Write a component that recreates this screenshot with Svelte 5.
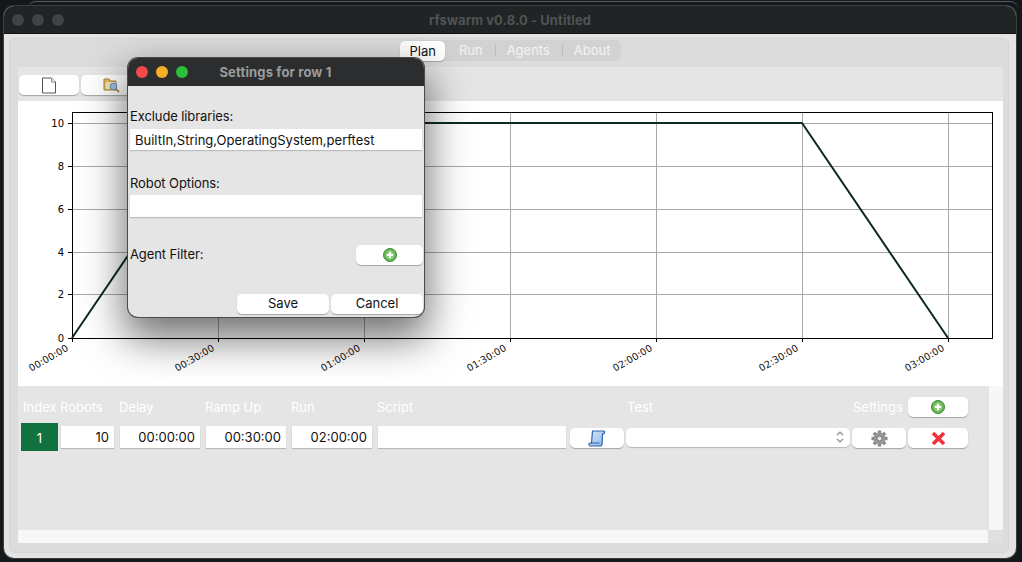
<script>
  // one row of the plan table, plus chart ticks
  const yTicks = [
    { label: "10", y: 123 },
    { label: "8", y: 166 },
    { label: "6", y: 209 },
    { label: "4", y: 252 },
    { label: "2", y: 294 },
    { label: "0", y: 338 }
  ];
  const xTicks = [
    { label: "00:00:00", x: 72 },
    { label: "00:30:00", x: 218 },
    { label: "01:00:00", x: 364 },
    { label: "01:30:00", x: 510 },
    { label: "02:00:00", x: 656 },
    { label: "02:30:00", x: 802 },
    { label: "03:00:00", x: 948 }
  ];
  const tabs = ["Run", "Agents", "About"];
  const gearTeeth = [0, 45, 90, 135];
</script>

{#snippet plus()}
  <svg class="ico" width="16" height="16" viewBox="0 0 16 16">
    <circle cx="8" cy="8" r="6.6" fill="#66ae58" stroke="#4b9a45" />
    <circle cx="8" cy="8" r="4.4" fill="#8bcb78" />
    <path d="M8 4.800v6.400M4.800 8h6.400" stroke="#fff" stroke-width="2" />
  </svg>
{/snippet}

<div class="desktop">
  <div class="behind"></div>
  <div class="window">
    <div class="titlebar">
      <div class="lights dim"><i></i><i></i><i></i></div>
      <span>rfswarm v0.8.0 - Untitled</span>
    </div>
    <div class="content">
      <div class="tabs">
        <div class="tabgroup">
          <span class="tab active">Plan</span>
          {#each tabs as t, i}
            <span class="tab" class:sep={i > 0}>{t}</span>
          {/each}
        </div>
      </div>
      <div class="panel">
        <div class="toolbar">
          <button class="btn tool" aria-label="New">
            <svg width="16" height="17" viewBox="0 0 16 17">
              <path d="M1.500 1h9l4 4v11h-13z" fill="#fff" stroke="#555" />
              <path d="M10.500 1v4h4" fill="#eee" stroke="#888" />
            </svg>
          </button>
          <button class="btn tool" aria-label="Open">
            <svg width="17" height="16" viewBox="0 0 17 16">
              <path d="M1 2h5l1 2h6v9H1z" fill="#e3b95c" stroke="#a8853a" />
              <path d="M2.500 5h10v7h-10z" fill="#f8e8b8" />
              <circle cx="10.500" cy="9.500" r="3.400" fill="#9cc3ea" stroke="#6a8fb5" />
              <path d="M13 12l3 3" stroke="#b4692f" stroke-width="1.600" />
            </svg>
          </button>
        </div>

        <svg class="chart" width="985" height="285" viewBox="18 101 985 285">
          <rect x="18" y="101" width="985" height="285" fill="#fff" />
          {#each yTicks as t}
            <line x1="72" x2="993" y1={t.y + 0.5} y2={t.y + 0.5} stroke="#a8a8a8" />
            <line x1="68" x2="72" y1={t.y + 0.5} y2={t.y + 0.5} stroke="#000" />
            <text class="tick" x="64" y={t.y + 4} text-anchor="end">{t.label}</text>
          {/each}
          {#each xTicks as t}
            <line x1={t.x + 0.5} x2={t.x + 0.5} y1="112" y2="338" stroke="#a8a8a8" />
            <line x1={t.x + 0.5} x2={t.x + 0.5} y1="338" y2="342" stroke="#000" />
            <text class="tick xt" text-anchor="end" transform="translate({t.x - 3} 350) rotate(-30)">{t.label}</text>
          {/each}
          <rect x="72.5" y="112.5" width="920" height="226" fill="none" stroke="#000" />
          <polyline points="72,338 218,123 802,123 948,338" fill="none" stroke="#0c2a20" stroke-width="2" />
        </svg>

        <div class="lower">
          <div class="table">
            <div class="grid head">
              <span>Index</span>
              <span>Robots</span>
              <span>Delay</span>
              <span>Ramp Up</span>
              <span>Run</span>
              <span>Script</span>
              <span></span>
              <span class="test">Test</span>
              <span class="settings">Settings</span>
              <button class="btn w60" aria-label="Add row">{@render plus()}</button>
            </div>
            <div class="grid row">
              <div class="index">1</div>
              <input class="w53" value="10" />
              <input class="w80" value="00:00:00" />
              <input class="w80" value="00:30:00" />
              <input class="w80" value="02:00:00" />
              <input class="w188" value="" />
              <button class="btn w54" aria-label="Script">
                <svg width="18" height="17" viewBox="0 0 18 17">
                  <defs>
                    <linearGradient id="scroll" x1="0" x2="1" y1="0" y2="1">
                      <stop offset="0" stop-color="#d6e6fb" />
                      <stop offset="1" stop-color="#8fb8ec" />
                    </linearGradient>
                  </defs>
                  <path d="M4.500 1H16c.8 0 .8 3-.5 3H14.500l-.4 9.500c0 1.500-1 2.500-2.500 2.500H2c-1.200 0-1.500-3 0-3h1.500z" fill="url(#scroll)" stroke="#2e62a8" stroke-width="1.200" />
                  <path d="M3 13h8.500" stroke="#2e62a8" />
                </svg>
              </button>
              <div class="select">
                <svg width="10" height="14" viewBox="0 0 10 14">
                  <path d="M2 5l3-3 3 3M2 9l3 3 3-3" fill="none" stroke="#8a8a8a" stroke-width="1.200" />
                </svg>
              </div>
              <button class="btn w54" aria-label="Settings">
                <svg width="17" height="17" viewBox="0 0 17 17">
                  {#each gearTeeth as a}
                    <rect x="6.800" y="0.500" width="3.400" height="16" fill="#858585" transform="rotate({a} 8.500 8.500)" />
                  {/each}
                  <circle cx="8.500" cy="8.500" r="6" fill="#989898" />
                  <circle cx="8.500" cy="8.500" r="2.600" fill="#e4e4e4" stroke="#6f6f6f" />
                </svg>
              </button>
              <button class="btn w60" aria-label="Delete">
                <svg width="15" height="15" viewBox="0 0 15 15">
                  <path d="M2 2l11 11M13 2L2 13" stroke="#f0323f" stroke-width="3.600" />
                </svg>
              </button>
            </div>
          </div>
          <div class="vscroll"></div>
        </div>
        <div class="hbar"><div class="hscroll"></div><div class="corner"></div></div>
      </div>
    </div>
  </div>

  <div class="dialog">
    <div class="dlgtitle">
      <div class="lights"><i class="r"></i><i class="y"></i><i class="g"></i></div>
      <span>Settings for row 1</span>
    </div>
    <div class="dlgbody">
      <span class="lbl f1">Exclude libraries:</span>
      <input class="wide first" value="BuiltIn,String,OperatingSystem,perftest" />
      <span class="lbl f2">Robot Options:</span>
      <input class="wide" value="" />
      <div class="agent">
        <span class="lbl">Agent Filter:</span>
        <button class="btn add" aria-label="Add filter">{@render plus()}</button>
      </div>
      <div class="actions">
        <button class="btn act">Save</button>
        <button class="btn act">Cancel</button>
      </div>
    </div>
  </div>
</div>

<style>
  :global(body) {
    margin: 0;
    background: #14181a;
  }
  .desktop {
    position: relative;
    width: 1022px;
    height: 562px;
    overflow: hidden;
    background: #14181a;
    font-family: Inter, "Liberation Sans", sans-serif;
    font-size: 13px;
    color: #111;
    padding: 6px 0 0 4px;
    box-sizing: border-box;
  }
  .behind {
    position: absolute;
    left: 28px;
    right: 4px;
    top: 1px;
    height: 8px;
    border-top: 1px solid #555b5e;
    border-radius: 8px 8px 0 0;
  }
  .window {
    position: relative;
    width: 1012px;
    height: 552px;
    border-radius: 10px;
    overflow: hidden;
    background: #e3e3e3;
    display: flex;
    flex-direction: column;
    box-shadow: 0 0 0 1px #3a3e40;
  }
  .titlebar {
    height: 28px;
    flex: none;
    background: #212425;
    border-bottom: 1px solid #111;
    box-sizing: border-box;
    display: flex;
    align-items: center;
    justify-content: center;
    position: relative;
    color: #4f5355;
    font-weight: 700;
    letter-spacing: 0.08px;
  }
  .lights {
    position: absolute;
    left: 8px;
    top: 8px;
    display: flex;
    gap: 8px;
  }
  .lights i {
    width: 12px;
    height: 12px;
    border-radius: 50%;
    background: #3f4345;
    display: block;
  }
  .lights .r { background: #f4484a; }
  .lights .y { background: #f9ae27; }
  .lights .g { background: #2cc13c; }

  .content {
    flex: 1;
    margin: 4px 7px 5px 5px;
    padding: 1px 5px 9px 8px;
    background: #dcdcdc;
    border: 1px solid #d4d4d4;
    border-radius: 6px;
    display: flex;
    flex-direction: column;
    box-sizing: border-box;
  }
  .tabs {
    height: 27px;
    flex: none;
    display: flex;
    justify-content: center;
    align-items: flex-start;
  }
  .tabgroup {
    display: flex;
    align-items: center;
    height: 21px;
    background: #d2d2d2;
    border-radius: 6px;
    color: #f4f4f4;
  }
  .tab {
    padding: 0 10px 0 12px;
    line-height: 13px;
  }
  .tab.sep {
    border-left: 1px solid #bdbdbd;
    padding-left: 11px;
  }
  .tab:not(.sep):not(.active) {
    padding-right: 12px;
  }
  .tab.sep:not(:last-child) {
    padding-right: 12px;
  }
  .tab.active {
    background: #fff;
    color: #111;
    line-height: 20px;
    border-radius: 5px;
    padding: 0 9px;
    margin-right: 2px;
    box-shadow: 0 1px 1px rgba(0, 0, 0, 0.25);
  }
  .panel {
    flex: 1;
    background: #e5e5e5;
    display: flex;
    flex-direction: column;
    min-height: 0;
  }
  .toolbar {
    height: 34px;
    flex: none;
    display: flex;
    gap: 2px;
    align-items: center;
    padding: 2px 0 0 1px;
    box-sizing: border-box;
  }
  .btn {
    background: #fff;
    border: 0;
    padding: 0;
    border-radius: 5px;
    height: 20px;
    font: inherit;
    color: #111;
    box-shadow: 0 1px 1px rgba(0, 0, 0, 0.28);
    display: flex;
    align-items: center;
    justify-content: center;
  }
  .tool {
    width: 60px;
  }
  .chart {
    display: block;
    flex: none;
  }
  .tick {
    font-family: "DejaVu Sans", sans-serif;
    font-size: 10px;
    fill: #000;
  }
  .xt {
    font-size: 9.7px;
    fill: #111;
  }
  .lower {
    flex: 1;
    display: flex;
    min-height: 0;
  }
  .table {
    flex: 1;
    padding: 11px 0 0 3px;
  }
  .vscroll {
    width: 14px;
    background: #f7f7f7;
  }
  .hbar {
    height: 13px;
    flex: none;
    display: flex;
  }
  .hscroll {
    flex: 1;
    background: #f7f7f7;
  }
  .corner {
    width: 15px;
    background: #e0e0e0;
  }
  .grid {
    display: grid;
    grid-template-columns: 40px 59px 86px 86px 86px 192px 56px 226px 56px 60px;
    align-items: center;
  }
  .head {
    height: 20px;
    color: #fff;
  }
  .head span:nth-child(-n + 9) {
    margin-left: -1px;
  }
  .head span:first-child {
    margin-left: 2px;
  }
  .head span.test {
    margin-left: 1px;
  }
  .head span.settings {
    margin-left: 1px;
  }
  .row {
    margin-top: 6px;
    height: 28px;
  }
  .row .btn {
    margin-top: 2px;
  }
  .index {
    width: 37px;
    height: 28px;
    line-height: 30px;
    text-align: center;
    background: #0f7240;
    color: #fff;
  }
  input {
    border: 0;
    border-radius: 0;
    background: #fff;
    height: 22px;
    padding: 0 5px;
    margin: 0;
    box-sizing: border-box;
    font: inherit;
    color: #111;
    text-align: right;
    box-shadow: 0 1px 1px rgba(0, 0, 0, 0.18);
    outline: none;
  }
  .w53 { width: 53px; }
  .w80 { width: 80px; }
  .w188 { width: 188px; }
  .w54 { width: 54px; }
  .w60 { width: 60px; }
  .select {
    width: 224px;
    height: 19px;
    background: #fff;
    border-radius: 5px;
    box-shadow: 0 1px 1px rgba(0, 0, 0, 0.2);
    display: flex;
    align-items: center;
    justify-content: flex-end;
    padding-right: 5px;
    box-sizing: border-box;
  }

  .dialog {
    position: absolute;
    left: 128px;
    top: 58px;
    width: 296px;
    height: 259px;
    border-radius: 10px;
    overflow: hidden;
    background: #e5e5e5;
    box-shadow: 0 0 0 1px #4a4a4a, 0 18px 40px 4px rgba(0, 0, 0, 0.55);
    display: flex;
    flex-direction: column;
  }
  .dlgtitle {
    height: 28px;
    flex: none;
    background: #2b2d2e;
    color: #9c9c9c;
    font-weight: 700;
    letter-spacing: 0.16px;
    display: flex;
    align-items: center;
    justify-content: center;
    position: relative;
    padding-right: 1px;
  }
  .dlgbody {
    flex: 1;
    padding: 0 1px 3px 2px;
    display: flex;
    flex-direction: column;
  }
  .lbl { letter-spacing: -0.1px; }
  .f1 { margin-top: 22px; line-height: 16px; }
  .f2 { margin-top: 25px; line-height: 16px; }
  .wide {
    width: 292px;
    height: 22px;
    text-align: left;
    margin-top: 4px;
  }
  .wide.first {
    height: 21px;
    margin-top: 5px;
  }
  .agent {
    margin-top: 28px;
    display: flex;
    justify-content: space-between;
    align-items: center;
  }
  .agent .lbl { margin-top: -2px; }
  .add { width: 67px; }
  .actions {
    margin-top: auto;
    display: flex;
    justify-content: flex-end;
    gap: 2px;
  }
  .act { width: 92px; padding-bottom: 2px; }
</style>
